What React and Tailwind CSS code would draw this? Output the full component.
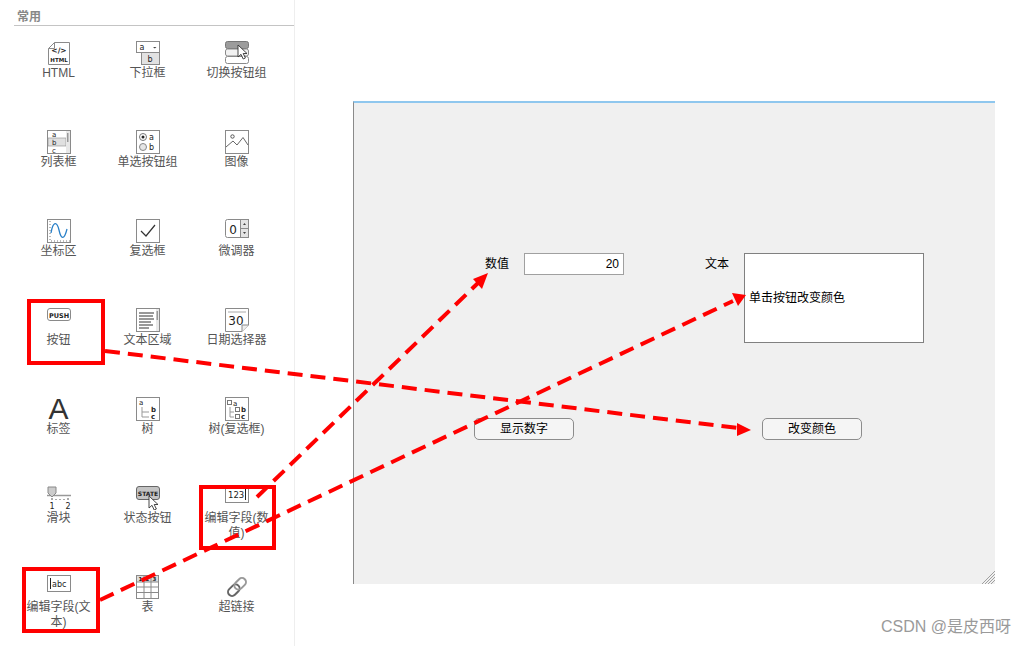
import React from 'react'

const CJK = "font-['Liberation_Sans','Noto_Sans_CJK_SC',sans-serif]"
const G = '#8a8a8a'

function Box({ children, w = 24, h = 24 }) {
  return <svg width={w} height={h} viewBox={`0 0 ${w} ${h}`} fontFamily="'DejaVu Sans', sans-serif">{children}</svg>
}

const Html = () => (
  <Box>
    <path d="M7.5 1.5H22.5V23.5H1.5V7.5Z M7.5 1.5V7.5H1.5" fill="#fff" stroke={G} />
    <text x="12" y="12" fontSize="7.5" fontWeight="700" textAnchor="middle" fill="#222">{'</>'}</text>
    <text x="12" y="20.5" fontSize="5.5" fontWeight="700" textAnchor="middle" fill="#222">HTML</text>
  </Box>
)
const Dropdown = () => (
  <Box>
    <rect x="0.5" y="0.5" width="23" height="11" fill="#fff" stroke={G} />
    <rect x="5.5" y="11.5" width="18" height="12" fill="#e2e2e2" stroke={G} />
    <text x="6" y="8.5" fontSize="8" textAnchor="middle" fill="#222">a</text>
    <path d="M17 6h3.5l-1.7 1.4z" fill="#444" />
    <text x="14" y="21" fontSize="8" textAnchor="middle" fill="#222">b</text>
  </Box>
)
const Cursor = ({ x, y, s = 1 }) => (
  <path transform={`translate(${x} ${y}) scale(${s})`} d="M0 0V12L3 9.3L5.2 14L7.4 13L5.2 8.5H9Z" fill="#fff" stroke="#333" strokeWidth="0.9" />
)
const Toggle = () => (
  <Box>
    <rect x="0.5" y="0.5" width="23" height="7" rx="2" fill="#9c9c9c" stroke="#777" />
    <rect x="0.5" y="8" width="23" height="7" rx="2" fill="#f2f2f2" stroke={G} />
    <rect x="0.5" y="15.5" width="23" height="7" rx="2" fill="#fff" stroke={G} />
    <Cursor x={13} y={4} />
  </Box>
)
const Listbox = () => (
  <Box>
    <rect x="0.5" y="0.5" width="23" height="23" fill="#fff" stroke={G} />
    <rect x="1" y="8" width="18" height="8" fill="#e0e0e0" stroke={G} strokeWidth="0.6" />
    <rect x="19" y="1" width="4" height="22" fill="#e8e8e8" />
    <rect x="20" y="3" width="1.5" height="9" fill="#999" />
    <text x="5" y="7" fontSize="7" fill="#222">a</text>
    <text x="5" y="15" fontSize="7" fill="#222">b</text>
    <text x="5" y="22.5" fontSize="7" fill="#222">c</text>
  </Box>
)
const Radio = () => (
  <Box>
    <rect x="0.5" y="0.5" width="23" height="23" fill="#fff" stroke={G} />
    <circle cx="7" cy="7" r="3.5" fill="#fff" stroke="#777" />
    <circle cx="7" cy="7" r="1.5" fill="#222" />
    <circle cx="7" cy="17" r="3.5" fill="#e6e6e6" stroke="#888" />
    <text x="13" y="10" fontSize="8" fill="#222">a</text>
    <text x="13" y="20" fontSize="8" fill="#222">b</text>
  </Box>
)
const Picture = () => (
  <Box>
    <rect x="0.5" y="0.5" width="23" height="23" fill="#fff" stroke={G} />
    <circle cx="7.5" cy="6.5" r="1.7" fill="none" stroke="#555" />
    <path d="M1 17L8 11L12 15L18 7.5L23 15" fill="none" stroke="#666" />
  </Box>
)
const Axes = () => (
  <Box>
    <rect x="0.5" y="0.5" width="23" height="23" fill="#fff" stroke={G} />
    <path d="M3 2V22H23" fill="none" stroke="#777" strokeDasharray="1 2" />
    <path d="M4 14C6 2 10 2 12 11S17 22 20 10" fill="none" stroke="#2a80c8" strokeWidth="1.3" />
  </Box>
)
const Check = () => (
  <Box>
    <rect x="0.5" y="0.5" width="23" height="23" fill="#fff" stroke={G} />
    <path d="M5 12L10 17L19 6" fill="none" stroke="#333" strokeWidth="1.2" />
  </Box>
)
const Spinner = () => (
  <Box h={20}>
    <rect x="0.5" y="0.5" width="23" height="18" rx="2" fill="#fff" stroke={G} />
    <rect x="15.5" y="0.5" width="8" height="9" fill="#e4e4e4" stroke={G} />
    <rect x="15.5" y="9.5" width="8" height="9" fill="#e4e4e4" stroke={G} />
    <path d="M18 6h3l-1.5-2zM18 13h3l-1.5 2z" fill="#444" />
    <text x="8" y="15" fontSize="12" textAnchor="middle" fill="#222">0</text>
  </Box>
)
const Push = () => (
  <Box h={14}>
    <rect x="0.5" y="0.5" width="23" height="12" rx="2.5" fill="#fff" stroke={G} />
    <text x="12" y="9.5" fontSize="6.5" fontWeight="700" textAnchor="middle" fill="#222">PUSH</text>
  </Box>
)
const TextArea = () => (
  <Box>
    <rect x="0.5" y="0.5" width="23" height="23" fill="#fff" stroke={G} />
    <rect x="20" y="1" width="3" height="22" fill="#e8e8e8" />
    <rect x="20.5" y="3" width="1.5" height="9" fill="#999" />
    <path d="M3 5H18M3 8H17M3 11H18M3 14H15M3 17H17M3 20H13" stroke="#333" />
  </Box>
)
const Calendar = () => (
  <Box>
    <path d="M0.5 0.5H23.5V17L17 23.5H0.5Z" fill="#fff" stroke={G} />
    <path d="M17 23.5V17H23.5" fill="#eee" stroke={G} />
    <path d="M3 4H21" stroke="#aaa" />
    <text x="11" y="17" fontSize="12" textAnchor="middle" fill="#222">30</text>
  </Box>
)
const Tree = () => (
  <Box>
    <rect x="0.5" y="0.5" width="23" height="23" fill="#fff" stroke={G} />
    <text x="3" y="8" fontSize="7" fill="#222">a</text>
    <path d="M6 10V20H13M6 15H13" fill="none" stroke="#999" />
    <text x="15" y="15" fontSize="7" fontWeight="700" fill="#222">b</text>
    <text x="15" y="22" fontSize="7" fontWeight="700" fill="#222">c</text>
  </Box>
)
const TreeCheck = () => (
  <Box>
    <rect x="0.5" y="0.5" width="23" height="23" fill="#fff" stroke={G} />
    <rect x="2.5" y="3.5" width="4" height="4" fill="none" stroke="#777" />
    <text x="8" y="9" fontSize="7" fill="#222">a</text>
    <path d="M5 10V20H9M5 15H9" fill="none" stroke="#999" />
    <rect x="10.5" y="10.5" width="4" height="4" fill="none" stroke="#777" />
    <rect x="10.5" y="17.5" width="4" height="4" fill="none" stroke="#777" />
    <text x="16" y="15" fontSize="7" fontWeight="700" fill="#222">b</text>
    <text x="16" y="22" fontSize="7" fontWeight="700" fill="#222">c</text>
  </Box>
)
const Slider = () => (
  <Box>
    <path d="M0 9.5H24" stroke="#999" strokeWidth="1.5" />
    <path d="M1 1H9V7L5 11L1 7Z" fill="#ccc" stroke="#888" />
    <path d="M5 12V14M9 13V14M13 13V14M17 13V14M21 12V14" stroke="#555" />
    <text x="5" y="23" fontSize="8" textAnchor="middle" fill="#222">1</text>
    <text x="21" y="23" fontSize="8" textAnchor="middle" fill="#222">2</text>
  </Box>
)
const StateBtn = () => (
  <Box>
    <rect x="0.5" y="0.5" width="23" height="13" rx="2.5" fill="#c4c4c4" stroke="#666" />
    <text x="12" y="9.5" fontSize="6" fontWeight="700" textAnchor="middle" fill="#222">STATE</text>
    <Cursor x={13} y={10} />
  </Box>
)
const Num = () => (
  <Box h={18}>
    <rect x="0.5" y="0.5" width="23" height="16" fill="#fff" stroke={G} />
    <text x="3" y="12" fontSize="8.5" fill="#222">123</text>
    <path d="M20.5 3V14" stroke="#222" />
  </Box>
)
const Abc = () => (
  <Box h={18}>
    <rect x="0.5" y="0.5" width="23" height="16" fill="#fff" stroke={G} />
    <path d="M3.5 3V14" stroke="#222" />
    <text x="5" y="12" fontSize="8" fill="#222">abc</text>
  </Box>
)
const Table = () => (
  <Box>
    <rect x="0.5" y="0.5" width="22" height="23" fill="#fff" stroke={G} />
    <rect x="1" y="1" width="21" height="6" fill="#ddd" />
    <path d="M8 1V23M15 1V23M1 7H22M1 12H22M1 17.5H22" stroke={G} />
    <text x="4.5" y="6" fontSize="5.5" fontWeight="700" textAnchor="middle" fill="#222">1</text>
    <text x="11.5" y="6" fontSize="5.5" fontWeight="700" textAnchor="middle" fill="#222">2</text>
    <text x="18.5" y="6" fontSize="5.5" fontWeight="700" textAnchor="middle" fill="#222">3</text>
  </Box>
)
const Link = () => (
  <Box>
    <g fill="none" stroke="#666" strokeWidth="2" transform="rotate(-45 12 12)">
      <rect x="1" y="8" width="13" height="8" rx="4" />
      <rect x="10" y="8" width="13" height="8" rx="4" stroke="#999" />
    </g>
  </Box>
)
const LabelA = () => <span className="block h-6 text-[30px] leading-[24px] font-['Liberation_Sans',sans-serif] font-light text-[#333]">A</span>

const items = [
  [Html, 'HTML'], [Dropdown, '下拉框'], [Toggle, '切换按钮组'],
  [Listbox, '列表框'], [Radio, '单选按钮组'], [Picture, '图像'],
  [Axes, '坐标区'], [Check, '复选框'], [Spinner, '微调器'],
  [Push, '按钮', true], [TextArea, '文本区域'], [Calendar, '日期选择器'],
  [LabelA, '标签'], [Tree, '树'], [TreeCheck, '树(复选框)'],
  [Slider, '滑块'], [StateBtn, '状态按钮'], [Num, '编辑字段(数值)'],
  [Abc, '编辑字段(文本)'], [Table, '表'], [Link, '超链接'],
]

function Palette() {
  return (
    <aside className="w-[295px] h-[646px] shrink-0 border-r border-[#eeeeee] pl-[14px]">
      <div className="h-[26px] pt-[9px] pl-[3px] w-[280px] border-b border-[#c4c4c4] text-[12px] leading-[16px] font-bold text-[#888888]">常用</div>
      <div className="grid grid-cols-[repeat(3,89px)] auto-rows-[89px] pt-[15px]">
        {items.map(([Icon, label]) => (
          <div key={label} className="flex flex-col items-center">
            <div className="h-[25px] flex items-start justify-center"><Icon /></div>
            <div className="w-[72px] text-center text-[12px] leading-[15px] text-[#555555]">{label}</div>
          </div>
        ))}
      </div>
    </aside>
  )
}

function Canvas() {
  return (
    <div className="relative w-[642px] h-[483px] bg-[#f0f0f0] border-t-2 border-t-[#8fc7ee] border-l border-l-[#8a8a8a] text-[12px] text-black">
      <span className="absolute left-[131px] top-[153px] leading-[16px]">数值</span>
      <div className="absolute left-[170px] top-[150px] w-[100px] h-[22px] bg-white border border-[#a0a0a0] text-right pr-[4px] leading-[20px]">20</div>
      <span className="absolute left-[351px] top-[153px] leading-[16px]">文本</span>
      <div className="absolute left-[390px] top-[150px] w-[180px] h-[90px] bg-white border border-[#808080] pl-[4px] flex items-center">单击按钮改变颜色</div>
      <button className="absolute left-[120px] top-[315px] w-[100px] h-[22px] rounded-[5px] bg-[#f5f5f5] border border-[#8c8c8c] leading-[20px]">显示数字</button>
      <button className="absolute left-[408px] top-[315px] w-[100px] h-[22px] rounded-[5px] bg-[#f5f5f5] border border-[#8c8c8c] leading-[20px]">改变颜色</button>
      <svg className="absolute right-0 bottom-0" width="14" height="14" viewBox="0 0 14 14">
        <path d="M1 14L14 1M4 14L14 4M7 14L14 7M10 14L14 10" stroke="#a0a0a0" />
      </svg>
    </div>
  )
}

function Annotations() {
  const dash = { stroke: '#ff0000', strokeWidth: 4, strokeDasharray: '15 8', fill: 'none' }
  return (
    <svg className="absolute left-0 top-0 pointer-events-none" width="1033" height="646" viewBox="0 0 1033 646">
      <g fill="none" stroke="#ff0000" strokeWidth="4">
        <rect x="29" y="301" width="74" height="62" />
        <rect x="201" y="487" width="73" height="61" />
        <rect x="24" y="569" width="74" height="62" />
      </g>
      <path d="M105 351L738 428" {...dash} />
      <path d="M257 497L478 283" {...dash} />
      <path d="M100 600L733 301" {...dash} />
      <path d="M751 430L737 423L737 436Z" fill="#ff0000" />
      <path d="M488 273L473 279L482 289Z" fill="#ff0000" />
      <path d="M746 295L732 293L738 306Z" fill="#ff0000" />
    </svg>
  )
}

export default function App() {
  return (
    <div className={`relative w-[1033px] h-[646px] bg-white overflow-hidden flex ${CJK}`}>
      <Palette />
      <main className="flex-1 pl-[58px] pt-[101px]">
        <Canvas />
      </main>
      <Annotations />
      <span className="absolute left-[881px] top-[617px] text-[16px] leading-[20px] text-[#9a9a9a]">CSDN @是皮西呀</span>
    </div>
  )
}
